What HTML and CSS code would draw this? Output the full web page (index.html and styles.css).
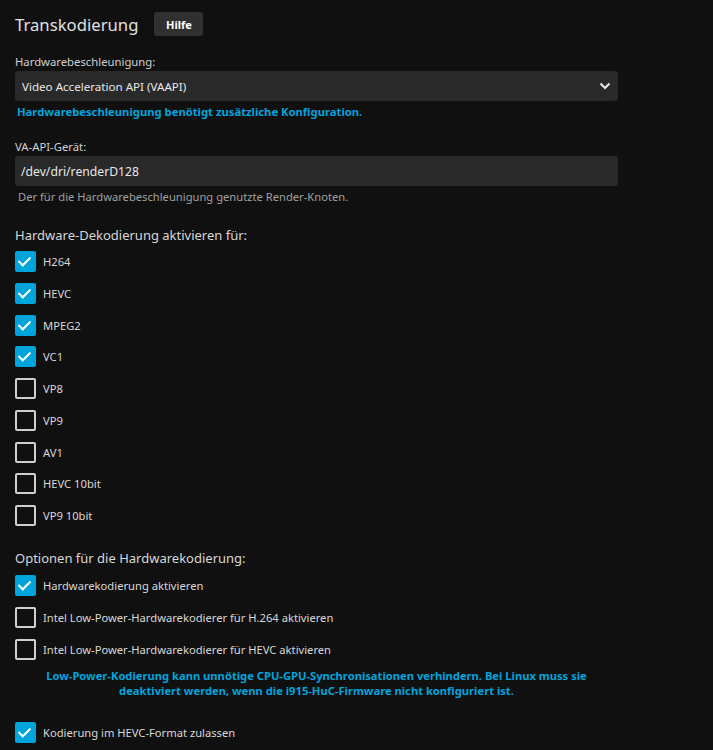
FILE: index.html
```html
<!DOCTYPE html>
<html lang="de">
<head>
<meta charset="utf-8">
<link rel="stylesheet" href="styles.css">
</head>
<body>
<div class="page">
  <div class="header">
    <h2 class="title">Transkodierung</h2>
    <button class="help">Hilfe</button>
  </div>

  <div class="field">
    <label class="label">Hardwarebeschleunigung:</label>
    <div class="select">
      <span>Video Acceleration API (VAAPI)</span>
      <svg class="chev" width="12" height="8" viewBox="0 0 12 8"><path d="M1.5 1.5 L6 6 L10.5 1.5" fill="none" stroke="#e6e6e6" stroke-width="2.2"/></svg>
    </div>
    <div class="note">Hardwarebeschleunigung benötigt zusätzliche Konfiguration.</div>
  </div>

  <div class="field second">
    <label class="label">VA-API-Gerät:</label>
    <div class="input">/dev/dri/renderD128</div>
    <div class="desc">Der für die Hardwarebeschleunigung genutzte Render-Knoten.</div>
  </div>

  <h3 class="section">Hardware-Dekodierung aktivieren für:</h3>
  <div class="checks">
    <label class="check"><span class="box on"></span>H264</label>
    <label class="check"><span class="box on"></span>HEVC</label>
    <label class="check"><span class="box on"></span>MPEG2</label>
    <label class="check"><span class="box on"></span>VC1</label>
    <label class="check"><span class="box"></span>VP8</label>
    <label class="check"><span class="box"></span>VP9</label>
    <label class="check"><span class="box"></span>AV1</label>
    <label class="check"><span class="box"></span>HEVC 10bit</label>
    <label class="check"><span class="box"></span>VP9 10bit</label>
  </div>

  <h3 class="section enc">Optionen für die Hardwarekodierung:</h3>
  <div class="checks">
    <label class="check"><span class="box on"></span>Hardwarekodierung aktivieren</label>
    <label class="check"><span class="box"></span>Intel Low-Power-Hardwarekodierer für H.264 aktivieren</label>
    <label class="check"><span class="box"></span>Intel Low-Power-Hardwarekodierer für HEVC aktivieren</label>
  </div>
  <div class="warn">Low-Power-Kodierung kann unnötige CPU-GPU-Synchronisationen verhindern. Bei Linux muss sie deaktiviert werden, wenn die i915-HuC-Firmware nicht konfiguriert ist.</div>

  <div class="checks last">
    <label class="check"><span class="box on"></span>Kodierung im HEVC-Format zulassen</label>
  </div>
</div>
</body>
</html>
```
FILE: styles.css
```css
html, body {
  margin: 0;
  padding: 0;
  background: #101010;
  color: #dddddd;
  font-family: "Noto Sans", "Open Sans", sans-serif;
}
.page {
  padding: 12px 95px 0 15px;
}
.header {
  display: flex;
  align-items: center;
  gap: 16px;
  height: 24px;
}
.title {
  margin: 0;
  font-size: 16.7px;
  font-weight: 400;
  color: #e0e0e0;
}
.help {
  font-family: inherit;
  background: #303030;
  color: #ffffff;
  border: 0;
  border-radius: 3px;
  font-size: 11px;
  font-weight: 700;
  height: 24px;
  width: 49px;
  padding: 0;
}
.field {
  margin-top: 18px;
}
.field.second {
  margin-top: 20px;
}
.label {
  display: block;
  font-size: 11.3px;
  color: #d0d0d0;
  line-height: 16px;
  margin-bottom: 1px;
}
.select, .input {
  background: #292929;
  border-radius: 3px;
  height: 30px;
  display: flex;
  align-items: center;
  padding: 0 7px;
  font-size: 11.6px;
  color: #e8e8e8;
}
.input {
  padding: 0 6px;
  font-size: 12.2px;
}
.select span { flex: 1; }
.note {
  color: #00a4dc;
  font-weight: 700;
  font-size: 11.25px;
  margin-top: 4px;
  padding-left: 2px;
  line-height: 14px;
}
.desc {
  color: #a0a0a0;
  font-size: 11.2px;
  margin-top: 4px;
  padding-left: 3px;
  line-height: 14px;
}
.section {
  margin: 22px 0 7px;
  font-size: 13px;
  font-weight: 400;
  color: #d8d8d8;
  line-height: 18px;
}
.section.enc {
  margin-top: 23px;
  margin-bottom: 8px;
}
.checks {
  display: flex;
  flex-direction: column;
  gap: 10.75px;
}
.check {
  display: flex;
  align-items: center;
  gap: 7px;
  height: 21px;
  font-size: 11.2px;
  color: #d8d8d8;
}
.box {
  width: 17px;
  height: 17px;
  border: 2px solid #cfcfcf;
  border-radius: 2px;
  flex: none;
  position: relative;
  box-sizing: content-box;
}
.box.on {
  background: #00a4dc;
  border-color: #00a4dc;
}
.box.on::after {
  content: "";
  position: absolute;
  left: 4px;
  top: 1px;
  width: 5px;
  height: 10px;
  border: solid #ffffff;
  border-width: 0 2px 2px 0;
  transform: rotate(45deg);
}
.warn {
  color: #00a4dc;
  font-weight: 700;
  font-size: 11.2px;
  line-height: 15px;
  text-align: center;
  margin: 8px 0 0;
  padding: 0 24px;
}
.checks.last {
  margin-top: 24px;
}
```
